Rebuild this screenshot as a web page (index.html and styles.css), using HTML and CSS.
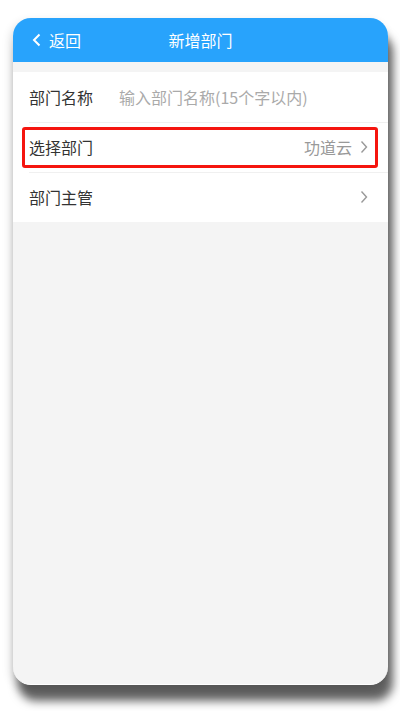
FILE: index.html
```html
<!DOCTYPE html>
<html lang="zh">
<head>
  <meta charset="UTF-8" />
  <meta name="viewport" content="width=device-width, initial-scale=1.0"/>
  <title>新增部门</title>
  <link rel="stylesheet" href="styles.css">
</head>
<body>
  <div class="phone">
    <div class="header">
      <div class="back">
        <svg class="back-icon" width="9" height="14" viewBox="0 0 9 14"><path d="M7.5 1.5 L2 7 L7.5 12.5" fill="none" stroke="#fff" stroke-width="2"/></svg>
        <span>返回</span>
      </div>
      <div class="title">新增部门</div>
    </div>

    <div class="list">
      <div class="row">
        <div class="label">部门名称</div>
        <div class="input">输入部门名称(15个字以内)</div>
      </div>
      <div class="row picked">
        <div class="label">选择部门</div>
        <div class="value">功道云</div>
        <svg class="arrow" width="8" height="14" viewBox="0 0 8 14"><path d="M1.5 1.5 L6.5 7 L1.5 12.5" fill="none" stroke="#999" stroke-width="1.4"/></svg>
        <div class="highlight"></div>
      </div>
      <div class="row">
        <div class="label">部门主管</div>
        <div class="value"></div>
        <svg class="arrow" width="8" height="14" viewBox="0 0 8 14"><path d="M1.5 1.5 L6.5 7 L1.5 12.5" fill="none" stroke="#999" stroke-width="1.4"/></svg>
      </div>
    </div>
  </div>
</body>
</html>
```

FILE: styles.css
```css
html {
  background: #fff;
}
body {
  margin: 0;
  padding: 18px 12px 0 13px;
  min-height: 711px;
  box-sizing: border-box;
  font-family: "Noto Sans CJK SC", "Noto Sans", sans-serif;
}
.phone {
  width: 375px;
  height: 666px;
  background: #f4f4f4;
  border-radius: 18px;
  border-bottom: 1px solid #fff;
  overflow: hidden;
  box-shadow: 5px 16px 10px rgba(0, 0, 0, 0.62), -2px 4px 10px rgba(0, 0, 0, 0.15);
}
.header {
  position: relative;
  height: 44px;
  background: #28a3fc;
  color: #fff;
  display: flex;
  align-items: center;
  justify-content: center;
  font-size: 16px;
}
.back {
  position: absolute;
  left: 19px;
  top: 0;
  height: 44px;
  display: flex;
  align-items: center;
  gap: 8px;
}
.list {
  margin-top: 10px;
  background: #fff;
}
.row {
  position: relative;
  height: 50px;
  display: flex;
  align-items: center;
  padding: 0 20px 0 16px;
  font-size: 16px;
  color: #333;
}
.row + .row::before {
  content: "";
  position: absolute;
  top: 0;
  left: 16px;
  right: 0;
  height: 1px;
  background: #f0f0f0;
}
.label {
  width: 90px;
}
.input {
  color: #aaa;
}
.value {
  flex: 1;
  text-align: right;
  color: #999;
  margin-right: 8px;
}
.arrow {
  display: block;
}
.highlight {
  position: absolute;
  left: 9px;
  right: 10px;
  top: 5px;
  bottom: 4px;
  border: 3px solid #f5150f;
  border-radius: 3px;
}
```
